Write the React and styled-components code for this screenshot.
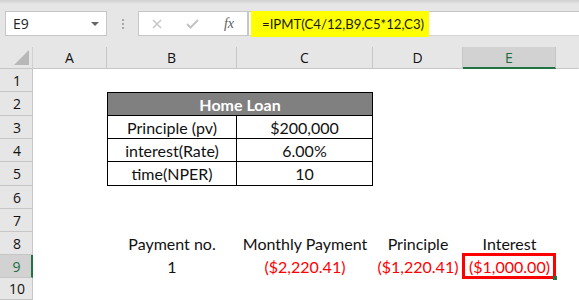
import React from 'react';
import styled, { createGlobalStyle } from 'styled-components';

const GlobalStyle = createGlobalStyle`
  html, body {
    margin: 0;
    padding: 0;
    background: #ffffff;
  }
  * {
    box-sizing: border-box;
  }
`;

const columns = ['A', 'B', 'C', 'D', 'E'];

const loanRows = [
  ['Principle (pv)', '$200,000'],
  ['interest(Rate)', '6.00%'],
  ['time(NPER)', '10'],
];

export default function App() {
  return (
    <>
      <GlobalStyle />
      <Window>
        <FormulaBar>
          <NameBox>
            <span>E9</span>
            <DropArrow />
          </NameBox>
          <Grip>
            <i />
            <i />
            <i />
          </Grip>
          <FxBox>
            <svg width="10" height="10" viewBox="0 0 10 10">
              <path d="M1 1 L9 9 M9 1 L1 9" stroke="#c4c4c4" strokeWidth="1.4" fill="none" />
            </svg>
            <svg width="13" height="10" viewBox="0 0 13 10">
              <path d="M1 5 L4.5 8.5 L12 1" stroke="#c4c4c4" strokeWidth="2" fill="none" />
            </svg>
            <FxLabel>fx</FxLabel>
          </FxBox>
          <FormulaInput>
            <Highlight>=IPMT(C4/12,B9,C5*12,C3)</Highlight>
          </FormulaInput>
        </FormulaBar>

        <Sheet>
          <Row $h={22}>
            <Corner>
              <CornerTriangle />
            </Corner>
            {columns.map((c) => (
              <ColHeader key={c} $active={c === 'E'}>
                {c}
              </ColHeader>
            ))}
            <ColHeader $last />
          </Row>

          <Row $h={23}>
            <RowHeader>1</RowHeader>
          </Row>

          <Row $h={24}>
            <RowHeader>2</RowHeader>
            <Blank />
            <TableHead>Home Loan</TableHead>
          </Row>

          {loanRows.map(([label, value], i) => (
            <Row key={label} $h={i === 2 ? 24 : 23}>
              <RowHeader>{i + 3}</RowHeader>
              <Blank />
              <TableCell $first>{label}</TableCell>
              <TableCell>{value}</TableCell>
            </Row>
          ))}

          <Row $h={23}>
            <RowHeader>6</RowHeader>
          </Row>
          <Row $h={23}>
            <RowHeader>7</RowHeader>
          </Row>

          <Row $h={23}>
            <RowHeader>8</RowHeader>
            <Blank />
            <Cell>Payment no.</Cell>
            <Cell>Monthly Payment</Cell>
            <Cell>Principle</Cell>
            <Cell>Interest</Cell>
          </Row>

          <Row $h={23}>
            <RowHeader $active>9</RowHeader>
            <Blank />
            <Cell>1</Cell>
            <Cell $red>($2,220.41)</Cell>
            <Cell $red>($1,220.41)</Cell>
            <Cell $red>
              ($1,000.00)
              <RedBox />
              <FillHandle />
            </Cell>
          </Row>

          <Row $h={22}>
            <RowHeader>10</RowHeader>
          </Row>
        </Sheet>
      </Window>
    </>
  );
}

const Window = styled.div`
  width: 579px;
  height: 300px;
  overflow: hidden;
  background: #ffffff;
  display: flex;
  flex-direction: column;
`;

const FormulaBar = styled.div`
  height: 47px;
  flex-shrink: 0;
  display: flex;
  align-items: flex-start;
  padding: 11px 0 0 5px;
  background: linear-gradient(#d0d0d0 0px, #e6e6e6 4px, #e6e6e6 100%);
`;

const NameBox = styled.div`
  width: 102px;
  height: 25px;
  background: #ffffff;
  border: 1px solid #c6c6c6;
  display: flex;
  align-items: center;
  justify-content: space-between;
  padding: 0 7px 0 7px;
  font-family: 'Open Sans', sans-serif;
  font-size: 14px;
  color: #222222;
`;

const DropArrow = styled.div`
  width: 0;
  height: 0;
  border-left: 4px solid transparent;
  border-right: 4px solid transparent;
  border-top: 4px solid #666666;
`;

const Grip = styled.div`
  width: 31px;
  height: 25px;
  display: flex;
  flex-direction: column;
  align-items: center;
  justify-content: center;
  gap: 2px;

  i {
    width: 2px;
    height: 2px;
    background: #a8a8a8;
  }
`;

const FxBox = styled.div`
  width: 110px;
  height: 25px;
  background: #ffffff;
  border: 1px solid #c6c6c6;
  display: flex;
  align-items: center;
  justify-content: space-between;
  padding: 0 13px 0 13px;
`;

const FxLabel = styled.span`
  font-family: 'Liberation Serif', serif;
  font-style: italic;
  font-size: 14px;
  color: #606060;
`;

const FormulaInput = styled.div`
  flex: 1;
  height: 25px;
  background: #ffffff;
  border-top: 1px solid #c6c6c6;
  border-left: 1px solid #c6c6c6;
  border-bottom: 1px solid #d6d6d6;
  padding-left: 2px;
  display: flex;
`;

const Highlight = styled.div`
  width: 178px;
  height: 26px;
  margin-top: -1px;
  background: #ffff00;
  display: flex;
  align-items: center;
  padding-left: 11px;
  font-family: 'Lato', sans-serif;
  font-size: 13.2px;
  color: #1a1a1a;
  white-space: nowrap;
`;

const Sheet = styled.div`
  flex: 1;
  display: flex;
  flex-direction: column;
  font-family: 'Lato', sans-serif;
`;

const Row = styled.div`
  height: ${(p) => p.$h}px;
  flex-shrink: 0;
  display: grid;
  grid-template-columns: 33px 74px 130px 136px 90px 93px 1fr;
`;

const Corner = styled.div`
  background: #e6e6e6;
  border-bottom: 1px solid #c6c6c6;
  border-right: 1px solid #d0d0d0;
  position: relative;
`;

const CornerTriangle = styled.div`
  position: absolute;
  right: 3px;
  bottom: 3px;
  width: 0;
  height: 0;
  border-left: 15px solid transparent;
  border-bottom: 15px solid #b8b8b8;
`;

const ColHeader = styled.div`
  background: ${(p) => (p.$active ? '#d2d2d2' : '#e6e6e6')};
  border-right: 1px solid ${(p) => (p.$last ? 'transparent' : '#c6c6c6')};
  border-bottom: ${(p) => (p.$active ? '2px solid #217346' : '1px solid #c6c6c6')};
  display: flex;
  align-items: center;
  justify-content: center;
  padding-top: ${(p) => (p.$active ? '1px' : '0')};
  font-family: 'Open Sans', sans-serif;
  font-size: 14px;
  color: ${(p) => (p.$active ? '#1e6b41' : '#111111')};
`;

const RowHeader = styled.div`
  background: ${(p) => (p.$active ? '#d2d2d2' : '#e6e6e6')};
  border-bottom: 1px solid #c6c6c6;
  border-right: ${(p) => (p.$active ? '2px solid #217346' : '1px solid #c6c6c6')};
  display: flex;
  align-items: center;
  justify-content: center;
  padding-left: 2px;
  font-family: 'Open Sans', sans-serif;
  font-size: 14px;
  color: ${(p) => (p.$active ? '#1e6b41' : '#111111')};
`;

const Blank = styled.div``;

const Cell = styled.div`
  position: relative;
  display: flex;
  align-items: center;
  justify-content: center;
  font-size: 16px;
  white-space: nowrap;
  color: ${(p) => (p.$red ? '#ff0000' : '#111111')};
`;

const TableHead = styled.div`
  grid-column: span 2;
  background: #808080;
  border: 1px solid #000000;
  display: flex;
  align-items: center;
  justify-content: center;
  font-size: 16px;
  font-weight: 700;
  color: #ffffff;
`;

const TableCell = styled(Cell)`
  border-right: 1px solid #000000;
  border-bottom: 1px solid #000000;
  border-left: ${(p) => (p.$first ? '1px solid #000000' : 'none')};
`;

const RedBox = styled.div`
  position: absolute;
  left: -1px;
  top: -2px;
  right: 0;
  bottom: -1px;
  border: 3px solid #ff0000;
  pointer-events: none;
`;

const FillHandle = styled.div`
  position: absolute;
  right: -1px;
  bottom: -2px;
  width: 4px;
  height: 4px;
  background: #217346;
`;
